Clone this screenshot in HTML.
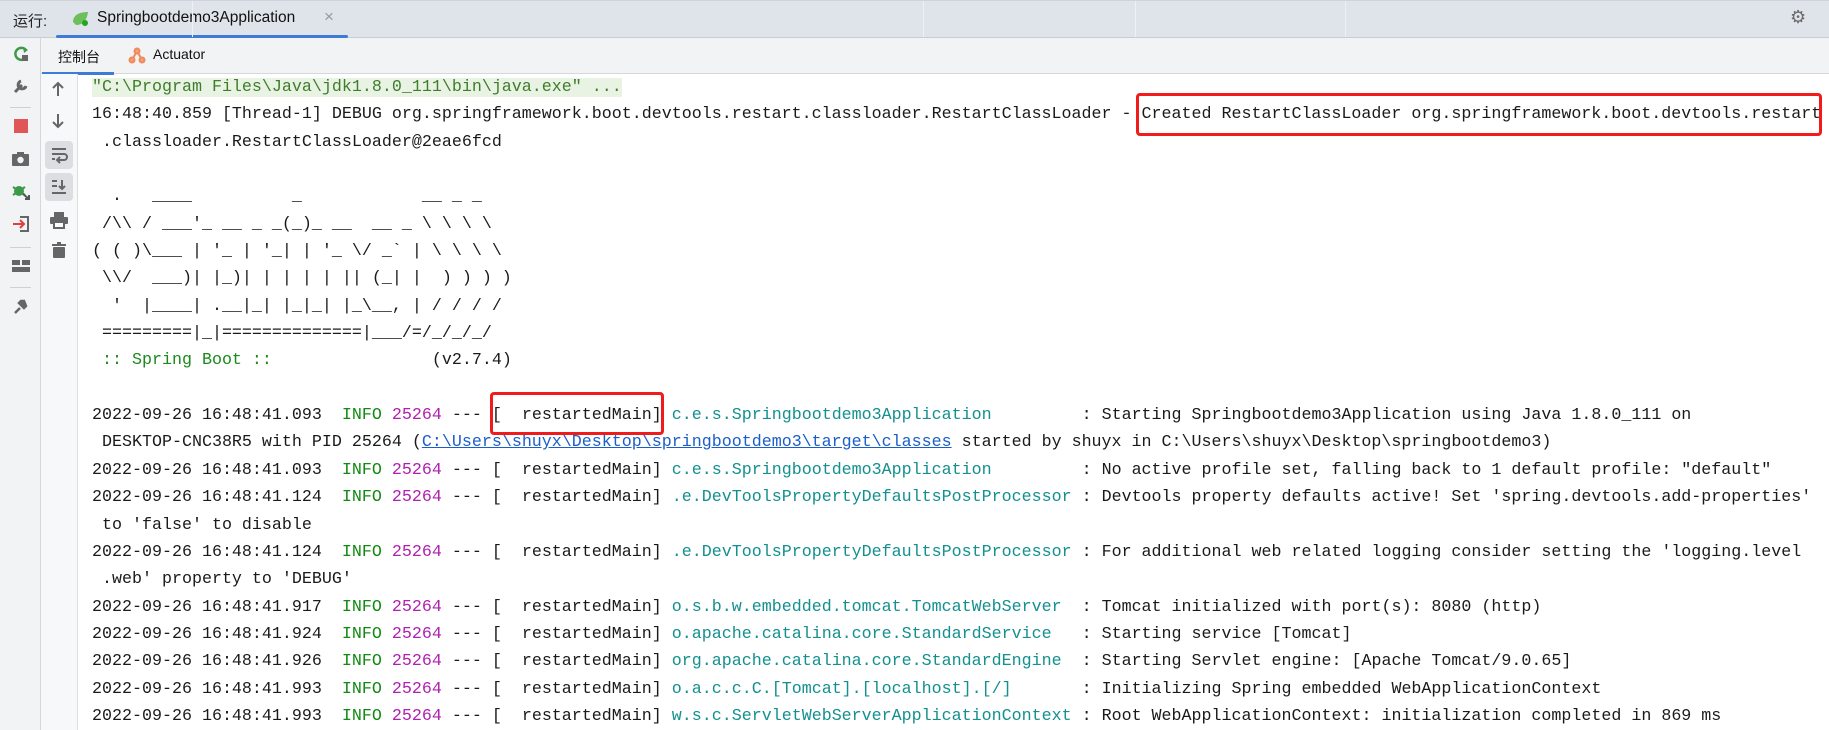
<!DOCTYPE html>
<html><head><meta charset="utf-8"><style>
*{margin:0;padding:0;box-sizing:border-box}
body{width:1829px;height:730px;overflow:hidden;background:#fff;position:relative;font-family:"Liberation Sans","Noto Sans CJK SC",sans-serif}
.top{position:absolute;left:0;top:0;width:1829px;height:38px;background:#dfe3ea;border-top:1px solid #cfd3d9;border-bottom:1px solid #c9ccd2}
.left{position:absolute;left:0;top:38px;width:41px;height:692px;background:#f2f3f5;border-right:1px solid #d5d7db}
.tabs{position:absolute;left:41px;top:38px;width:1788px;height:36px;background:#f2f3f5;border-bottom:1px solid #d5d7db}
.gut{position:absolute;left:41px;top:74px;width:37px;height:656px;background:#f7f8fa;border-right:1px solid #dcdee2}
pre{position:absolute;left:92px;top:74px;font-family:"Liberation Mono",monospace;font-size:16.67px;line-height:27.35px;color:#1a1a1a;white-space:pre}
.g{color:#3f7d2a}.i{color:#108a10}.p{color:#b020b0}.c{color:#13908f}.l{color:#1a5fc8;text-decoration:underline}.sb{color:#1a8a1a}
.hl{background:#e9f3e4}
.box{position:absolute;border:3px solid #f01c1c;border-radius:4px}
.ic{position:absolute}
</style></head><body>
<div class="top"></div>
<div style="position:absolute;left:13px;top:10px;font-size:15px;color:#222">运行:</div>
<svg class="ic" style="left:71px;top:10px" width="20" height="18"><path d="M2 12 C2 4 10 2 17 2 C16 10 12 15 5 15 Z" fill="#6cbf5c"/><circle cx="14" cy="13" r="3" fill="#1fa81f"/></svg>
<div style="position:absolute;left:97px;top:9px;font-size:15.5px;color:#111">Springbootdemo3Application</div>
<div style="position:absolute;left:324px;top:7px;font-size:17px;color:#999">×</div>
<div style="position:absolute;left:56px;top:35px;width:292px;height:3px;background:#3d7bd6;border-radius:2px"></div>
<div style="position:absolute;left:192px;top:1px;width:1px;height:36px;background:#eef0f3"></div>
<div style="position:absolute;left:923px;top:1px;width:1px;height:36px;background:#eef0f3"></div>
<div style="position:absolute;left:1135px;top:1px;width:1px;height:36px;background:#eef0f3"></div>
<div style="position:absolute;left:1345px;top:1px;width:1px;height:36px;background:#eef0f3"></div>
<div style="position:absolute;left:1790px;top:7px;font-size:18px;color:#6b6b6b">⚙</div>
<div class="left"></div>
<div class="tabs"></div>
<div style="position:absolute;left:58px;top:47px;font-size:14px;color:#111">控制台</div>
<div style="position:absolute;left:42px;top:72px;width:72px;height:3px;background:#3d7bd6"></div>
<svg class="ic" style="left:128px;top:46px" width="18" height="18"><g stroke="#f08a5a" stroke-width="2" fill="#f5a07a"><line x1="4" y1="14" x2="9" y2="5"/><line x1="9" y1="5" x2="14" y2="14"/><circle cx="9" cy="5" r="2.5"/><circle cx="4" cy="14" r="2.5"/><circle cx="14" cy="14" r="2.5"/></g></svg>
<div style="position:absolute;left:153px;top:46px;font-size:14px;color:#111">Actuator</div>
<div class="gut"></div>
<svg class="ic" style="left:12px;top:45px" width="18" height="18"><path d="M14 5 A6 6 0 1 0 15 11" stroke="#3d9a4a" stroke-width="2.5" fill="none"/><path d="M11 2 L16 5 L12 8Z" fill="#3d9a4a"/><rect x="10" y="10" width="6" height="6" fill="#666"/></svg>
<svg class="ic" style="left:12px;top:77px" width="18" height="18"><path d="M3 15 L10 8 M9 4 A4 4 0 1 0 14 9" stroke="#666" stroke-width="3" fill="none"/></svg>
<div style="position:absolute;left:10px;top:107px;width:21px;height:1px;background:#d0d0d0"></div>
<div style="position:absolute;left:14px;top:119px;width:14px;height:14px;background:#e05555"></div>
<svg class="ic" style="left:11px;top:151px" width="20" height="16"><rect x="1" y="3" width="17" height="12" rx="1" fill="#666"/><rect x="6" y="1" width="7" height="3" fill="#666"/><circle cx="9.5" cy="9" r="3.2" fill="#f2f3f5"/></svg>
<svg class="ic" style="left:11px;top:182px" width="20" height="18"><circle cx="8" cy="9" r="5" fill="#3d9a4a"/><path d="M2 5 L14 13 M2 13 L14 5" stroke="#3d9a4a" stroke-width="2"/><path d="M12 12 L18 17 M14 17 L18 17 L18 13" stroke="#555" stroke-width="2" fill="none"/></svg>
<svg class="ic" style="left:11px;top:215px" width="20" height="18"><path d="M9 2 H17 V16 H9" stroke="#666" stroke-width="2" fill="none"/><path d="M2 9 H12 M9 5 L13 9 L9 13" stroke="#e04040" stroke-width="2" fill="none"/></svg>
<div style="position:absolute;left:10px;top:247px;width:21px;height:1px;background:#d0d0d0"></div>
<svg class="ic" style="left:11px;top:259px" width="20" height="14"><rect x="1" y="1" width="8" height="5" fill="#666"/><rect x="11" y="1" width="8" height="5" fill="#666"/><rect x="1" y="8" width="18" height="5" fill="#666"/></svg>
<div style="position:absolute;left:10px;top:287px;width:21px;height:1px;background:#d0d0d0"></div>
<svg class="ic" style="left:12px;top:297px" width="18" height="18"><path d="M3 16 L8 11 M7 6 L12 11 L14 9 L12 4 L9 4 Z" stroke="#666" stroke-width="2.5" fill="#666"/></svg>
<svg class="ic" style="left:50px;top:80px" width="16" height="18"><path d="M8 16 V3 M3 8 L8 3 L13 8" stroke="#666" stroke-width="2" fill="none"/></svg>
<svg class="ic" style="left:50px;top:112px" width="16" height="18"><path d="M8 2 V15 M3 10 L8 15 L13 10" stroke="#666" stroke-width="2" fill="none"/></svg>
<div style="position:absolute;left:45px;top:141px;width:28px;height:28px;background:#dcdee2;border-radius:4px"></div>
<svg class="ic" style="left:50px;top:146px" width="18" height="18"><path d="M2 3 H16 M2 8 H14 A3 3 0 0 1 14 14 H8 M10 11 L7 14 L10 17 M2 13 H5" stroke="#666" stroke-width="2" fill="none"/></svg>
<div style="position:absolute;left:45px;top:173px;width:28px;height:28px;background:#dcdee2;border-radius:4px"></div>
<svg class="ic" style="left:50px;top:178px" width="18" height="18"><path d="M2 3 H7 M2 8 H7 M2 15 H16 M12 2 V11 M9 8 L12 11 L15 8" stroke="#666" stroke-width="2" fill="none"/></svg>
<svg class="ic" style="left:49px;top:211px" width="20" height="18"><rect x="5" y="1" width="10" height="5" fill="#666"/><rect x="1" y="6" width="18" height="7" rx="1" fill="#666"/><rect x="5" y="11" width="10" height="6" fill="#fff" stroke="#666" stroke-width="2"/></svg>
<svg class="ic" style="left:51px;top:241px" width="16" height="18"><rect x="1" y="3" width="14" height="2" fill="#666"/><rect x="6" y="1" width="4" height="2" fill="#666"/><rect x="2" y="6" width="12" height="11" rx="1" fill="#666"/></svg>
<pre><span class="g hl">"C:\Program Files\Java\jdk1.8.0_111\bin\java.exe" ...</span>
16:48:40.859 [Thread-1] DEBUG org.springframework.boot.devtools.restart.classloader.RestartClassLoader - Created RestartClassLoader org.springframework.boot.devtools.restart
 .classloader.RestartClassLoader@2eae6fcd

  .   ____          _            __ _ _
 /\\ / ___'_ __ _ _(_)_ __  __ _ \ \ \ \
( ( )\___ | '_ | '_| | '_ \/ _` | \ \ \ \
 \\/  ___)| |_)| | | | | || (_| |  ) ) ) )
  '  |____| .__|_| |_|_| |_\__, | / / / /
 =========|_|==============|___/=/_/_/_/
<span class="sb"> :: Spring Boot :: </span>               (v2.7.4)

2022-09-26 16:48:41.093  <span class="i">INFO</span> <span class="p">25264</span> --- [  restartedMain] <span class="c">c.e.s.Springbootdemo3Application        </span> : Starting Springbootdemo3Application using Java 1.8.0_111 on
 DESKTOP-CNC38R5 with PID 25264 (<span class="l">C:\Users\shuyx\Desktop\springbootdemo3\target\classes</span> started by shuyx in C:\Users\shuyx\Desktop\springbootdemo3)
2022-09-26 16:48:41.093  <span class="i">INFO</span> <span class="p">25264</span> --- [  restartedMain] <span class="c">c.e.s.Springbootdemo3Application        </span> : No active profile set, falling back to 1 default profile: "default"
2022-09-26 16:48:41.124  <span class="i">INFO</span> <span class="p">25264</span> --- [  restartedMain] <span class="c">.e.DevToolsPropertyDefaultsPostProcessor</span> : Devtools property defaults active! Set 'spring.devtools.add-properties'
 to 'false' to disable
2022-09-26 16:48:41.124  <span class="i">INFO</span> <span class="p">25264</span> --- [  restartedMain] <span class="c">.e.DevToolsPropertyDefaultsPostProcessor</span> : For additional web related logging consider setting the 'logging.level
 .web' property to 'DEBUG'
2022-09-26 16:48:41.917  <span class="i">INFO</span> <span class="p">25264</span> --- [  restartedMain] <span class="c">o.s.b.w.embedded.tomcat.TomcatWebServer </span> : Tomcat initialized with port(s): 8080 (http)
2022-09-26 16:48:41.924  <span class="i">INFO</span> <span class="p">25264</span> --- [  restartedMain] <span class="c">o.apache.catalina.core.StandardService  </span> : Starting service [Tomcat]
2022-09-26 16:48:41.926  <span class="i">INFO</span> <span class="p">25264</span> --- [  restartedMain] <span class="c">org.apache.catalina.core.StandardEngine </span> : Starting Servlet engine: [Apache Tomcat/9.0.65]
2022-09-26 16:48:41.993  <span class="i">INFO</span> <span class="p">25264</span> --- [  restartedMain] <span class="c">o.a.c.c.C.[Tomcat].[localhost].[/]      </span> : Initializing Spring embedded WebApplicationContext
2022-09-26 16:48:41.993  <span class="i">INFO</span> <span class="p">25264</span> --- [  restartedMain] <span class="c">w.s.c.ServletWebServerApplicationContext</span> : Root WebApplicationContext: initialization completed in 869 ms</pre>
<div class="box" style="left:1136px;top:93px;width:686px;height:43px"></div>
<div class="box" style="left:490px;top:392px;width:174px;height:43px"></div>
</body></html>
